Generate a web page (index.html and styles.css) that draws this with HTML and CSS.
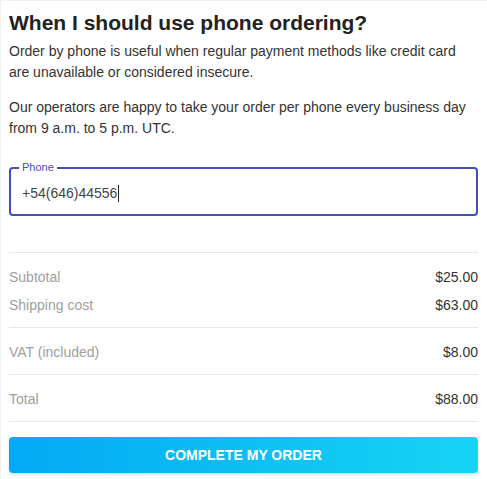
FILE: index.html
```html
<!DOCTYPE html>
<html lang="en">
<head>
<meta charset="utf-8">
<title>Phone ordering</title>
<link rel="stylesheet" href="styles.css">
</head>
<body>
<main class="card">
  <h1 class="title">When I should use phone ordering?</h1>
  <p class="text">Order by phone is useful when regular payment methods like credit card are unavailable or considered insecure.</p>
  <p class="text">Our operators are happy to take your order per phone every business day from 9 a.m. to 5 p.m. UTC.</p>

  <fieldset class="field">
    <legend class="field-label">Phone</legend>
    <div class="field-value">+54(646)44556<span class="caret"></span></div>
  </fieldset>

  <section class="summary">
    <div class="group">
      <div class="row"><span class="label">Subtotal</span><span class="value">$25.00</span></div>
      <div class="row"><span class="label">Shipping cost</span><span class="value">$63.00</span></div>
    </div>
    <div class="group">
      <div class="row"><span class="label">VAT (included)</span><span class="value">$8.00</span></div>
    </div>
    <div class="group">
      <div class="row"><span class="label">Total</span><span class="value">$88.00</span></div>
    </div>
  </section>

  <button class="btn" type="button">Complete my order</button>
</main>
</body>
</html>
```

FILE: styles.css
```css
* { box-sizing: border-box; }

html, body {
  margin: 0;
  padding: 0;
  background: #fff;
}

body {
  font-family: "Liberation Sans", Arial, sans-serif;
  color: #333;
}

.card {
  border-top: 1px solid #eef1f1;
  border-left: 1px solid #eef1f1;
  padding: 9px 9px 0 8px;
  min-height: 479px;
}

.title {
  margin: 0 0 5px;
  font-size: 21px;
  line-height: 26px;
  font-weight: 700;
  color: #222;
}

.text {
  margin: 0 0 14px;
  font-size: 14px;
  line-height: 21px;
  color: #333;
}

.field {
  margin: 22px 0 0;
  padding: 0 11px 0 11px;
  border: 2px solid #3f51b5;
  border-radius: 4px;
  min-width: 0;
}

.field-label {
  margin-left: -3px;
  padding: 0 3px;
  font-size: 11px;
  line-height: 13px;
  color: #3f51b5;
}

.field-value {
  height: 40px;
  display: flex;
  align-items: center;
  font-size: 14px;
  color: #444;
  padding-bottom: 2px;
}

.caret {
  display: inline-block;
  width: 0;
  height: 17px;
  border-left: 1px solid #222;
  margin-left: 1px;
}

.summary {
  margin-top: 36px;
  border-top: 1px solid #e8e8e8;
}

.group {
  padding: 9px 0;
  border-bottom: 1px solid #e8e8e8;
}

.row {
  display: flex;
  justify-content: space-between;
  align-items: center;
  height: 28px;
  font-size: 14px;
  padding-top: 1px;
}

.label { color: #9e9e9e; }
.value { color: #333; }

.btn {
  display: block;
  width: 100%;
  height: 36px;
  margin-top: 15px;
  border: 0;
  border-radius: 4px;
  background: linear-gradient(to right, #03a9f4, #17d4f3);
  box-shadow: 0 2px 3px rgba(3, 169, 244, 0.25);
  color: #fff;
  font-family: "Liberation Sans", Arial, sans-serif;
  font-size: 14px;
  font-weight: 700;
  text-transform: uppercase;
}
```
